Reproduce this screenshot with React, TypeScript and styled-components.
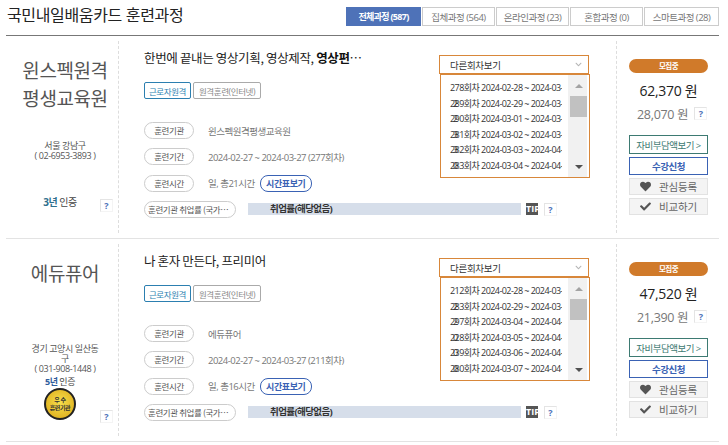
import styled, { createGlobalStyle } from 'styled-components'
import { FaCheck, FaChevronDown, FaHeart } from 'react-icons/fa'

const fontStack = `"Open Sans", "Noto Sans CJK KR", sans-serif`

const GlobalStyle = createGlobalStyle`
  html, body {
    margin: 0;
    background: #fff;
    font-family: ${fontStack};
  }
  * {
    box-sizing: border-box;
  }
`

const Page = styled.div`
  width: 713px;
  margin-left: 6px;
`

const Header = styled.header`
  height: 36px;
  display: flex;
  justify-content: space-between;
  border-bottom: 1px solid #777;
`

const PageTitle = styled.h1`
  margin: 3px 0 0 1px;
  font-size: 16px;
  line-height: 24px;
  font-weight: 400;
  color: #222;
  letter-spacing: -0.35px;
`

const Tabs = styled.nav`
  display: flex;
  height: 19px;
  margin-top: 7px;
  gap: 1px;
`

const Tab = styled.div<{ $active?: boolean; $width: number }>`
  width: ${(p) => p.$width}px;
  display: flex;
  align-items: center;
  justify-content: center;
  font-size: ${(p) => (p.$active ? 9 : 9.5)}px;
  letter-spacing: ${(p) => (p.$active ? -0.7 : -0.5)}px;
  border: 1px solid ${(p) => (p.$active ? '#4e72b8' : '#ccc')};
  background: ${(p) => (p.$active ? '#4e72b8' : '#fff')};
  color: ${(p) => (p.$active ? '#fff' : '#777')};
  font-weight: ${(p) => (p.$active ? 700 : 400)};
`

const Row = styled.article`
  height: 203px;
  padding: 5px 0;
  display: flex;
  border-bottom: 1px solid #e3e3e3;
`

const OrgColumn = styled.div`
  width: 112px;
  padding: 14px 5px 0 6px;
  display: flex;
  flex-direction: column;
  align-items: center;
`

const OrgName = styled.div`
  height: 86px;
  width: 96px;
  padding-top: 2px;
  align-self: flex-end;
  font-size: 19px;
  line-height: 28px;
  color: #555;
  text-align: center;
  letter-spacing: -0.4px;
`

const Address = styled.div`
  width: 68px;
  margin-left: 5px;
  font-size: 9px;
  line-height: 10px;
  color: #555;
  text-align: center;
  letter-spacing: -0.4px;
`

const CertRow = styled.div<{ $top: number }>`
  width: 100%;
  margin-top: ${(p) => p.$top}px;
  display: flex;
  align-items: flex-start;
  justify-content: space-between;
  padding-left: 28px;
`

const Cert = styled.div`
  width: 40px;
  display: flex;
  flex-direction: column;
  align-items: center;
`

const CertText = styled.div<{ $small?: boolean }>`
  font-size: ${(p) => (p.$small ? 9 : 10)}px;
  line-height: ${(p) => (p.$small ? 12 : 14)}px;
  color: #444;
  letter-spacing: -0.5px;
  white-space: nowrap;
  b {
    color: ${(p) => (p.$small ? '#2f5d9e' : '#2e6f8e')};
  }
`

const Seal = styled.div`
  width: 32px;
  height: 32px;
  border-radius: 50%;
  border: 2px solid #222;
  background: radial-gradient(circle at 50% 45%, #f7e04e, #d9a514);
  display: flex;
  align-items: center;
  justify-content: center;
  text-align: center;
  font-size: 6px;
  line-height: 8px;
  font-weight: 700;
  color: #333;
  letter-spacing: -0.4px;
`

const Help = styled.span<{ $top?: number }>`
  width: 13px;
  height: 13px;
  margin-top: ${(p) => p.$top ?? 0}px;
  flex: none;
  display: inline-flex;
  align-items: center;
  justify-content: center;
  border: 1px solid #e4e4e4;
  border-right-color: #f4f4f4;
  border-bottom-color: #f4f4f4;
  font-size: 9px;
  font-weight: 700;
  color: #4e72b8;
`

const CourseColumn = styled.div`
  width: 498px;
  padding: 14px 27px 0 25px;
  border-left: 1px dashed #ddd;
`

const TitleRow = styled.div`
  display: flex;
  justify-content: space-between;
  align-items: flex-start;
`

const CourseTitle = styled.h2`
  margin: -6px 0 0;
  width: 220px;
  font-family: "Noto Sans CJK SC", sans-serif;
  font-size: 12.5px;
  line-height: 18px;
  font-weight: 400;
  color: #222;
  letter-spacing: -0.35px;
  white-space: nowrap;
  overflow: hidden;
  text-overflow: ellipsis;
  b {
    font-weight: 700;
    color: #111;
  }
`

const Select = styled.div`
  position: relative;
  width: 150px;
  height: 19px;
  padding: 0 6px 0 10px;
  display: flex;
  align-items: center;
  justify-content: space-between;
  border: 1px solid #d8873a;
  font-size: 9.5px;
  color: #333;
  letter-spacing: -0.3px;
  svg {
    color: #b5b5b5;
    font-size: 7px;
  }
`

const OptionList = styled.div`
  position: absolute;
  top: 18px;
  left: 0;
  width: 150px;
  height: 104px;
  display: flex;
  background: #fff;
  border: 1px solid #d8873a;
  z-index: 2;
`

const Options = styled.div`
  flex: 1;
  min-width: 0;
  padding: 5px 6px 0 9px;
  overflow: hidden;
`

const Option = styled.div`
  position: relative;
  height: 15.6px;
  line-height: 15.6px;
  font-size: 9px;
  color: #333;
  letter-spacing: -0.55px;
  white-space: nowrap;
  overflow: hidden;
`

const GhostDigit = styled.span`
  position: absolute;
  left: 3px;
  top: 0;
`

const ScrollTrack = styled.div`
  width: 19px;
  flex: none;
  margin-right: 2px;
  padding-left: 2px;
  background: #f1f1f1;
  display: flex;
  flex-direction: column;
  align-items: center;
`

const ScrollArrow = styled.div<{ $down?: boolean }>`
  height: 21px;
  display: flex;
  align-items: center;
  &::before {
    content: '';
    border-left: 4px solid transparent;
    border-right: 4px solid transparent;
    ${(p) =>
      p.$down ? 'border-top: 4px solid #505050;' : 'border-bottom: 4px solid #a3a3a3;'}
  }
`

const ScrollThumb = styled.div`
  width: 100%;
  height: 21px;
  background: #c1c1c1;
  margin-bottom: auto;
`

const Tags = styled.div`
  margin-top: 8px;
  display: flex;
  gap: 2px;
`

const Tag = styled.span<{ $primary?: boolean; $width: number }>`
  width: ${(p) => p.$width}px;
  height: 17px;
  display: flex;
  align-items: center;
  justify-content: center;
  border: 1px solid ${(p) => (p.$primary ? '#2c7fb0' : '#aaa')};
  border-radius: 2px;
  font-size: 8.5px;
  letter-spacing: -0.4px;
  color: ${(p) => (p.$primary ? '#2c7fb0' : '#888')};
`

const InfoList = styled.div`
  margin-top: 23px;
  display: flex;
  flex-direction: column;
  gap: 9.3px;
`

const InfoRow = styled.div`
  height: 17px;
  display: flex;
  align-items: center;
`

const Pill = styled.span<{ $wide?: boolean }>`
  width: ${(p) => (p.$wide ? 92 : 50)}px;
  height: 17px;
  flex: none;
  padding: 0 3px;
  line-height: 15px;
  text-align: center;
  border: 1px solid #ccc;
  border-radius: 9px;
  font-family: "Noto Sans CJK SC", sans-serif;
  font-size: 8.5px;
  color: #555;
  letter-spacing: -0.4px;
  white-space: nowrap;
  overflow: hidden;
  text-overflow: ellipsis;
`

const InfoText = styled.span`
  margin-left: 14px;
  font-size: 9.5px;
  color: #777;
  letter-spacing: -0.5px;
  white-space: nowrap;
`

const TimetableButton = styled.span`
  width: 52px;
  height: 17px;
  margin-left: 5px;
  line-height: 15px;
  text-align: center;
  border: 1px solid #3a62b4;
  border-radius: 8px;
  font-size: 9px;
  font-weight: 700;
  color: #3a62b4;
  letter-spacing: -0.4px;
`

const RateBar = styled.div`
  width: 273px;
  height: 12px;
  margin-left: 12px;
  padding-left: 22px;
  background: #d6deea;
  font-size: 9.5px;
  line-height: 12px;
  font-weight: 700;
  color: #333;
  letter-spacing: -0.6px;
`

const TipBox = styled.span`
  width: 12px;
  height: 12px;
  margin: 0 6px 0 5px;
  overflow: hidden;
  background: #555;
  color: #fff;
  font-size: 9px;
  line-height: 12px;
  font-weight: 700;
  text-align: center;
  white-space: nowrap;
`

const PriceColumn = styled.aside`
  width: 103px;
  padding: 18px 11px 0 12px;
  border-left: 1px dashed #ddd;
  display: flex;
  flex-direction: column;
`

const Status = styled.div`
  height: 14px;
  border-radius: 7px;
  background: #d07a2a;
  color: #fff;
  font-size: 7.5px;
  font-weight: 700;
  line-height: 14px;
  text-align: center;
  letter-spacing: -0.5px;
`

const Price = styled.div`
  margin-top: 8px;
  height: 20px;
  font-size: 14px;
  line-height: 20px;
  color: #222;
  text-align: center;
  letter-spacing: -0.3px;
`

const SubPrice = styled.div`
  margin-top: 2px;
  height: 20px;
  display: flex;
  align-items: center;
  justify-content: flex-start;
  gap: 6px;
  padding-left: 8px;
  font-size: 12.5px;
  color: #777;
  letter-spacing: -0.3px;
`

const ActionStack = styled.div`
  margin-top: 12px;
  display: flex;
  flex-direction: column;
`

const LineButton = styled.div<{ $color: string; $height: number; $bold?: boolean }>`
  height: ${(p) => p.$height}px;
  margin-bottom: 3px;
  display: flex;
  align-items: center;
  justify-content: center;
  border: 1px solid ${(p) => p.$color};
  font-size: 9.5px;
  font-weight: ${(p) => (p.$bold ? 700 : 400)};
  color: ${(p) => p.$color};
  letter-spacing: -0.5px;
`

const GrayButton = styled.div`
  height: 17px;
  margin-bottom: 3px;
  display: flex;
  align-items: center;
  justify-content: center;
  gap: 8px;
  background: #f4f4f4;
  border: 1px solid #e2e2e2;
  font-size: 10.5px;
  color: #666;
  letter-spacing: -0.2px;
  svg {
    color: #555;
    font-size: 11px;
  }
`

interface CourseOption {
  ghost?: string
  text: string
}

interface Course {
  org: string[]
  address: string
  phone: string
  certYears: string
  certTop: number
  helpTop: number
  seal?: boolean
  title: string
  titleBold?: string
  round: string
  hours: string
  price: string
  subPrice: string
  options: CourseOption[]
}

const courses: Course[] = [
  {
    org: ['윈스펙원격', '평생교육원'],
    address: '서울 강남구',
    phone: '( 02-6953-3893 )',
    certYears: '3년',
    certTop: 34,
    helpTop: 4,
    title: '한번에 끝내는 영상기획, 영상제작, ',
    titleBold: '영상편집까지',
    round: '277회차',
    hours: '일, 총21시간',
    price: '62,370 원',
    subPrice: '28,070 원',
    options: [
      { text: '278회차 2024-02-28 ~ 2024-03-28' },
      { ghost: '2', text: '289회차 2024-02-29 ~ 2024-03-29' },
      { ghost: '2', text: '290회차 2024-03-01 ~ 2024-03-31' },
      { ghost: '3', text: '281회차 2024-03-02 ~ 2024-03-31' },
      { ghost: '3', text: '282회차 2024-03-03 ~ 2024-04-02' },
      { ghost: '0', text: '283회차 2024-03-04 ~ 2024-04-03' },
    ],
  },
  {
    org: ['에듀퓨어'],
    address: '경기 고양시 일산동구',
    phone: '( 031-908-1448 )',
    certYears: '5년',
    certTop: 2,
    helpTop: 34,
    seal: true,
    title: '나 혼자 만든다, 프리미어',
    round: '211회차',
    hours: '일, 총16시간',
    price: '47,520 원',
    subPrice: '21,390 원',
    options: [
      { text: '212회차 2024-02-28 ~ 2024-03-28' },
      { ghost: '2', text: '283회차 2024-02-29 ~ 2024-03-29' },
      { ghost: '2', text: '297회차 2024-03-04 ~ 2024-04-03' },
      { ghost: '0', text: '228회차 2024-03-05 ~ 2024-04-04' },
      { ghost: '0', text: '239회차 2024-03-06 ~ 2024-04-05' },
      { ghost: '0', text: '280회차 2024-03-07 ~ 2024-04-06' },
    ],
  },
]

const tabs = [
  { label: '전체과정 (587)', width: 75, active: true },
  { label: '집체과정 (564)', width: 73 },
  { label: '온라인과정 (23)', width: 73 },
  { label: '혼합과정 (0)', width: 73 },
  { label: '스마트과정 (28)', width: 75 },
]

const CourseRow = ({ course }: { course: Course }) => (
  <Row>
    <OrgColumn>
      <OrgName>
        {course.org.map((line) => (
          <div key={line}>{line}</div>
        ))}
      </OrgName>
      <Address>
        {course.address}
        <br />
        {course.phone}
      </Address>
      <CertRow $top={course.certTop}>
        <Cert>
          <CertText $small={course.seal}>
            <b>{course.certYears}</b> 인증
          </CertText>
          {course.seal && (
            <Seal>
              우 수
              <br />
              훈련기관
            </Seal>
          )}
        </Cert>
        <Help $top={course.helpTop}>?</Help>
      </CertRow>
    </OrgColumn>
    <CourseColumn>
      <TitleRow>
        <CourseTitle>
          {course.title}
          {course.titleBold && <b>{course.titleBold}</b>}
        </CourseTitle>
        <Select>
          다른회차보기
          <FaChevronDown />
          <OptionList>
            <Options>
              {course.options.map((option) => (
                <Option key={option.text}>
                  {option.text}
                  {option.ghost && <GhostDigit>{option.ghost}</GhostDigit>}
                </Option>
              ))}
            </Options>
            <ScrollTrack>
              <ScrollArrow />
              <ScrollThumb />
              <ScrollArrow $down />
            </ScrollTrack>
          </OptionList>
        </Select>
      </TitleRow>
      <Tags>
        <Tag $primary $width={47}>근로자원격</Tag>
        <Tag $width={68}>원격훈련(인터넷)</Tag>
      </Tags>
      <InfoList>
        <InfoRow>
          <Pill>훈련기관</Pill>
          <InfoText>{course.org.join('')}</InfoText>
        </InfoRow>
        <InfoRow>
          <Pill>훈련기간</Pill>
          <InfoText>2024-02-27 ~ 2024-03-27 ({course.round})</InfoText>
        </InfoRow>
        <InfoRow>
          <Pill>훈련시간</Pill>
          <InfoText>{course.hours}</InfoText>
          <TimetableButton>시간표보기</TimetableButton>
        </InfoRow>
        <InfoRow>
          <Pill $wide>훈련기관 취업률 (국가직무능력)</Pill>
          <RateBar>취업률(해당없음)</RateBar>
          <TipBox>TIP</TipBox>
          <Help>?</Help>
        </InfoRow>
      </InfoList>
    </CourseColumn>
    <PriceColumn>
      <Status>모집중</Status>
      <Price>{course.price}</Price>
      <SubPrice>
        {course.subPrice}
        <Help>?</Help>
      </SubPrice>
      <ActionStack>
        <LineButton $color="#3d7a72" $height={19}>자비부담액보기 &gt;</LineButton>
        <LineButton $color="#3a62b4" $height={18} $bold>수강신청</LineButton>
        <GrayButton>
          <FaHeart />
          관심등록
        </GrayButton>
        <GrayButton>
          <FaCheck />
          비교하기
        </GrayButton>
      </ActionStack>
    </PriceColumn>
  </Row>
)

export default function App() {
  return (
    <Page>
      <GlobalStyle />
      <Header>
        <PageTitle>국민내일배움카드 훈련과정</PageTitle>
        <Tabs>
          {tabs.map((tab) => (
            <Tab key={tab.label} $active={tab.active} $width={tab.width}>
              {tab.label}
            </Tab>
          ))}
        </Tabs>
      </Header>
      {courses.map((course) => (
        <CourseRow key={course.title} course={course} />
      ))}
    </Page>
  )
}
